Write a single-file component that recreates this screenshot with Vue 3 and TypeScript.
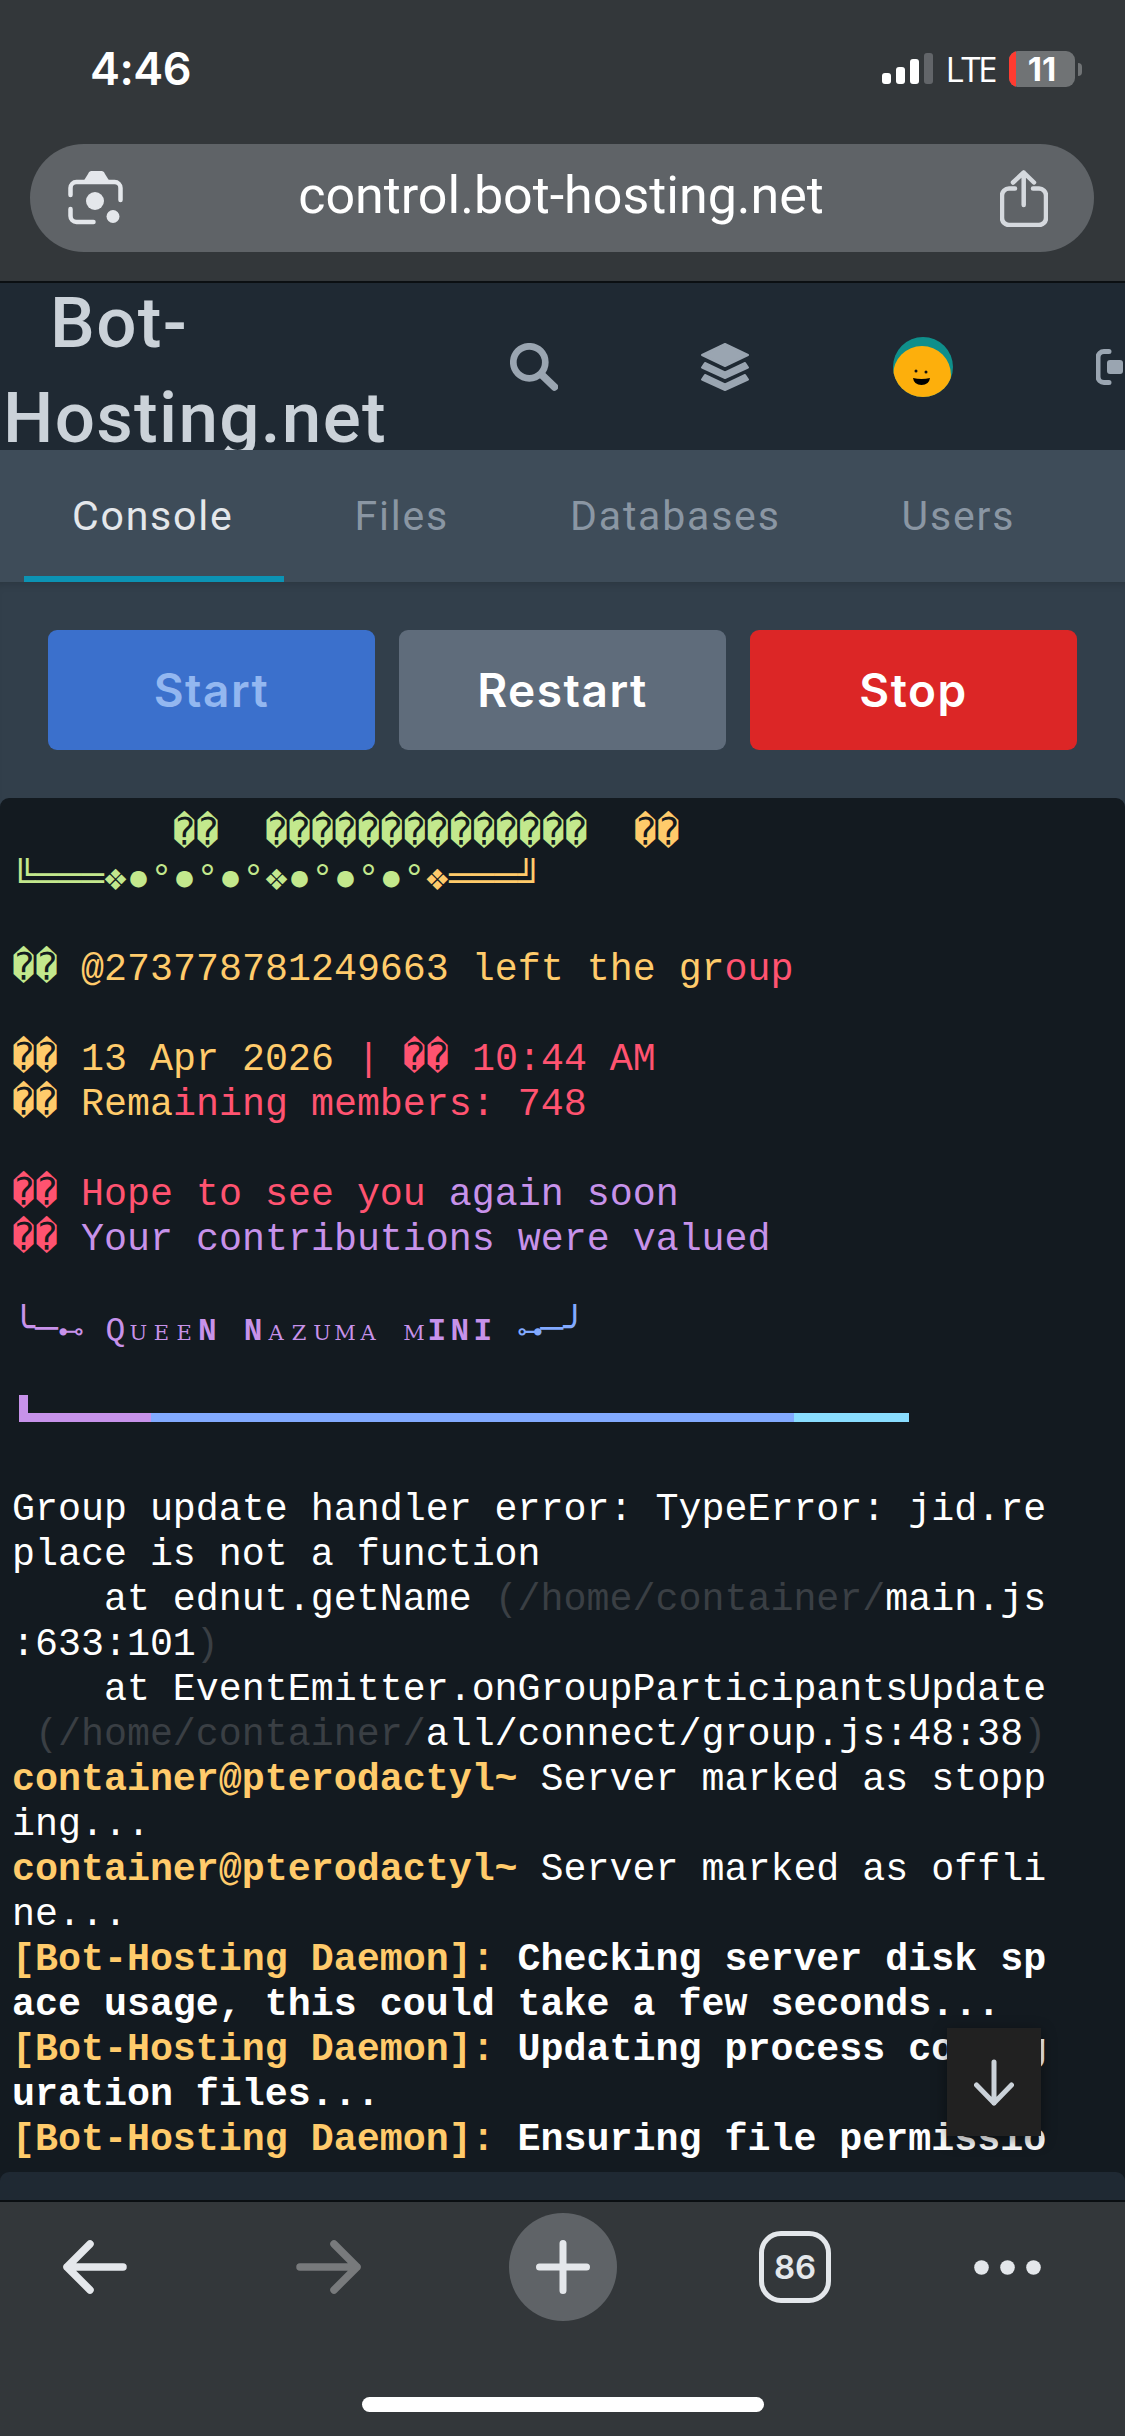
<script setup lang="ts">
interface Seg { t: string; c?: string; b?: boolean }
interface Cell { t: string; k: 'plain' | 'big' | 'q' | 'sm' | 'conn'; c: string }
const G = '#c3e88d', Y = '#ffcb6b', R = '#ff5370', P = '#c792ea', B = '#82aaff', W = '#ffffff', D = '#3a3f44'
const lines: Seg[][] = [
  [{ t: '       ��  ��������������', c: G }, { t: '  ', c: G }, { t: '��', c: Y }],
  [{ t: '╚═══❖●°●°●°❖●°●°●°', c: G }, { t: '❖═══╝', c: Y }],
  [],
  [{ t: '��', c: G }, { t: ' @273778781249663 left the gr', c: Y }, { t: 'oup', c: R }],
  [],
  [{ t: '��', c: Y }, { t: ' 13 Apr 2026 ', c: Y }, { t: '| �� 10:44 AM', c: R }],
  [{ t: '�� Rema', c: Y }, { t: 'ining members: 748', c: R }],
  [],
  [{ t: '�� Hope to see you ', c: R }, { t: 'again soon', c: P }],
  [{ t: '��', c: R }, { t: ' Your contributions were valued', c: P }],
  [],
  [],
  [],
  [],
  [],
  [{ t: 'Group update handler error: TypeError: jid.re', c: W }],
  [{ t: 'place is not a function', c: W }],
  [{ t: '    at ednut.getName ', c: W }, { t: '(/home/container/', c: D }, { t: 'main.js', c: W }],
  [{ t: ':633:101', c: W }, { t: ')', c: D }],
  [{ t: '    at EventEmitter.onGroupParticipantsUpdate', c: W }],
  [{ t: ' (/home/container/', c: D }, { t: 'all/connect/group.js:48:38', c: W }, { t: ')', c: D }],
  [{ t: 'container@pterodactyl~', c: Y, b: true }, { t: ' Server marked as stopp', c: W }],
  [{ t: 'ing...', c: W }],
  [{ t: 'container@pterodactyl~', c: Y, b: true }, { t: ' Server marked as offli', c: W }],
  [{ t: 'ne...', c: W }],
  [{ t: '[Bot-Hosting Daemon]:', c: Y, b: true }, { t: ' Checking server disk sp', c: W, b: true }],
  [{ t: 'ace usage, this could take a few seconds...', c: W, b: true }],
  [{ t: '[Bot-Hosting Daemon]:', c: Y, b: true }, { t: ' Updating process config', c: W, b: true }],
  [{ t: 'uration files...', c: W, b: true }],
  [{ t: '[Bot-Hosting Daemon]:', c: Y, b: true }, { t: ' Ensuring file permissio', c: W, b: true }]
]
const cellKind = (ch: string, i: number): Cell['k'] => {
  if (i === 17) return 'sm'
  if (ch === 'Q') return 'q'
  if ('NI'.includes(ch)) return 'big'
  if ('⊷⊶'.includes(ch)) return 'conn'
  if ('╰╯─ '.includes(ch)) return 'plain'
  return 'sm'
}
const queen: Cell[] = [...'╰─⊷ QUEEN NAZUMA MINI ⊶─╯'].map((ch, i) => ({
  t: ch,
  k: cellKind(ch, i),
  c: i >= 22 ? B : P
}))
const tabs = ['Console', 'Files', 'Databases', 'Users']
</script>

<template>
  <div class="phone">
    <header class="chrome-top">
      <div class="status">
        <span class="time">4:46</span>
        <div class="status-right">
          <svg width="51" height="31" viewBox="0 0 51 31" class="signal">
            <rect x="0" y="20" width="9" height="11" rx="3" fill="#fff" />
            <rect x="14" y="14" width="9" height="17" rx="3" fill="#fff" />
            <rect x="28" y="6" width="9" height="25" rx="3" fill="#fff" />
            <rect x="42" y="0" width="9" height="31" rx="3" fill="#626569" />
          </svg>
          <span class="lte">LTE</span>
          <div class="battery"><i class="batt-red"></i><span>11</span></div>
          <i class="batt-cap"></i>
        </div>
      </div>
      <div class="urlbar">
        <svg class="url-icon" width="56" height="56" viewBox="0 0 56 56" fill="none">
          <path d="M2.500 25v-7a6 6 0 0 1 6-6h38a6 6 0 0 1 6 6v12" stroke="#e4e7eb" stroke-width="4.500" stroke-linecap="round" />
          <path d="M15 12l5-8a4 4 0 0 1 3-3h11a4 4 0 0 1 3 3l5 8z" fill="#e4e7eb" />
          <path d="M2.500 39v7a6 6 0 0 0 6 6h17" stroke="#e4e7eb" stroke-width="4.500" stroke-linecap="round" />
          <circle cx="27" cy="31" r="9" fill="#e4e7eb" />
          <circle cx="45" cy="46.500" r="6.500" fill="#e4e7eb" />
        </svg>
        <span class="url">control.bot-hosting.net</span>
        <svg class="url-icon" width="48" height="57" viewBox="0 0 48 57" fill="none" stroke="#d5d9de" stroke-width="4.500" stroke-linecap="round" stroke-linejoin="round">
          <path d="M23.700 35V2.500M13 12.500L23.700 2.500 34 12.500" />
          <path d="M15 18.500H9a7 7 0 0 0-7 7V48a7 7 0 0 0 7 7h30a7 7 0 0 0 7-7V25.500a7 7 0 0 0-7-7h-6" />
        </svg>
      </div>
    </header>

    <nav class="topnav">
      <div class="brand">Bot-Hosting.net</div>
      <svg class="ni ni-search" width="48" height="48" viewBox="0 0 48 48" fill="none" stroke="#9aa5b1">
        <circle cx="19.300" cy="19.300" r="16" stroke-width="6.700" />
        <path d="M32 32l12.500 12" stroke-width="7.500" stroke-linecap="round" />
      </svg>
      <svg class="ni ni-layers" width="48" height="48" viewBox="0 0 48 48" fill="#9aa5b1" stroke="#9aa5b1" stroke-width="2" stroke-linejoin="round">
        <path d="M24 1L47 12 24 23 1 12z" />
        <path d="M4 20L24 29.500 44 20 47 24.500 24 35 1 24.500z" />
        <path d="M4 32L24 41.500 44 32 47 36.500 24 47 1 36.500z" />
      </svg>
      <svg class="ni ni-avatar" width="60" height="60" viewBox="0 0 60 60">
        <defs><clipPath id="avatar-clip"><circle cx="30" cy="30" r="30" /></clipPath></defs>
        <circle cx="30" cy="30" r="30" fill="#0f8f8b" />
        <circle cx="29" cy="38" r="29" fill="#fdaf0c" clip-path="url(#avatar-clip)" />
        <circle cx="23" cy="34" r="1.500" fill="#111" />
        <circle cx="33" cy="35" r="1.500" fill="#111" />
        <path d="M20 41q8.500 2 17 0q-1 7-8.500 7t-8.500-7z" fill="#000" />
      </svg>
      <svg class="ni ni-logout" width="27" height="36" viewBox="0 0 27 36" fill="none">
        <path d="M13 2.500H8a6 6 0 0 0-6 6v19a6 6 0 0 0 6 6h5" stroke="#9aa5b1" stroke-width="5" stroke-linecap="round" />
        <rect x="11" y="11" width="16" height="14" rx="3" fill="#9aa5b1" />
      </svg>
    </nav>

    <div class="subnav">
      <a v-for="(t, i) in tabs" :key="t" class="tab" :class="{ active: i === 0 }">{{ t }}</a>
    </div>

    <main class="content">
      <div class="actions">
        <button class="btn start">Start</button>
        <button class="btn restart">Restart</button>
        <button class="btn stop">Stop</button>
      </div>

      <section class="console">
        <div v-for="(l, i) in lines" :key="i" class="line">
          <template v-if="i === 11">
            <span v-for="(cell, j) in queen" :key="j" class="cell" :class="cell.k" :style="{ color: cell.c }">{{ cell.t }}</span>
          </template>
          <span v-else-if="i === 13" class="bar"><i class="seg p"></i><i class="seg b"></i><i class="seg c"></i></span>
          <template v-else>
            <span v-for="(s, j) in l" :key="j" :class="{ bold: s.b }" :style="{ color: s.c }">{{ s.t }}</span>
          </template>
        </div>
        <button class="scroll-down" aria-label="Scroll to bottom">
          <svg width="40" height="47" viewBox="0 0 40 47" fill="none" stroke="#cbd2d9" stroke-width="5" stroke-linecap="round" stroke-linejoin="round">
            <path d="M20 3v41M2.500 26L20 44 37.500 26" />
          </svg>
        </button>
      </section>
      <div class="foot-wrap"><div class="console-foot"></div></div>
    </main>

    <footer class="chrome-bottom">
      <div class="toolbar">
        <svg class="tb-back" width="64" height="54" viewBox="0 0 64 54" fill="none" stroke="#e4e7eb" stroke-width="7.500" stroke-linecap="round" stroke-linejoin="round">
          <path d="M60 27H4M27 4L4 27l23 23" />
        </svg>
        <svg class="tb-fwd" width="65" height="54" viewBox="0 0 65 54" fill="none" stroke="#787a7c" stroke-width="7.500" stroke-linecap="round" stroke-linejoin="round">
          <path d="M4 27h57M38 4l23 23-23 23" />
        </svg>
        <div class="plus">
          <svg width="54" height="54" viewBox="0 0 54 54" fill="none" stroke="#e4e7eb" stroke-width="7" stroke-linecap="round">
            <path d="M27 3.500v47M3.500 27h47" />
          </svg>
        </div>
        <div class="tabcount">86</div>
        <svg class="tb-more" width="67" height="15" viewBox="0 0 67 15" fill="#e4e7eb">
          <circle cx="7.500" cy="7.500" r="7.300" /><circle cx="33.500" cy="7.500" r="7.300" /><circle cx="59.500" cy="7.500" r="7.300" />
        </svg>
      </div>
      <div class="home"></div>
    </footer>
  </div>
</template>

<style>
html, body { margin: 0; background: #323f4b; }
</style>

<style scoped>
.phone { width: 1125px; height: 2436px; display: flex; flex-direction: column; overflow: hidden; font-family: Roboto, "Liberation Sans", sans-serif; background: #323f4b; }

.chrome-top { height: 281px; background: #33373a; border-bottom: 2px solid #0b0f12; flex: none; box-sizing: content-box; }
.status { height: 144px; display: flex; justify-content: space-between; padding: 0 43px 0 90px; box-sizing: border-box; }
.time { font-family: Inter, Roboto, sans-serif; font-weight: 600; font-size: 45px; line-height: 56px; margin-top: 41px; color: #fff; letter-spacing: -0.500px; }
.status-right { display: flex; align-items: flex-start; margin-top: 51px; }
.signal { margin-top: 2px; }
.lte { font-family: "Open Sans", Roboto, sans-serif; font-size: 35px; line-height: 36px; margin-left: 13px; padding-right: 3px; color: #fff; letter-spacing: -2.500px; white-space: nowrap; }
.battery { position: relative; width: 66px; height: 36px; margin-left: 11px; border-radius: 9px; background: #707375; overflow: hidden; text-align: center; color: #fff; font-size: 33px; font-weight: 700; line-height: 36px; font-family: Inter, Roboto, sans-serif; }
.batt-red { position: absolute; left: 0; top: 0; bottom: 0; width: 7px; background: #ff3b30; }
.batt-cap { width: 4px; height: 13px; margin: 12px 0 0 3px; background: #707375; border-radius: 0 5px 5px 0; }
.urlbar { margin: 0 31px 0 30px; height: 108px; border-radius: 54px; background: #5f6367; display: flex; align-items: center; justify-content: space-between; padding: 0 46px 0 38px; }
.url { color: #fff; font-size: 52px; line-height: 60px; margin: -4px 0 0 -2px; font-family: Roboto, sans-serif; }

.topnav { height: 167px; background: #1f2933; flex: none; display: flex; align-items: center; overflow: hidden; }
.brand { flex: none; align-self: flex-start; width: 440px; height: 175px; margin: -8px 0 0; overflow: hidden; color: #cbd2d9; font-size: 71px; font-weight: 500; line-height: 95px; letter-spacing: 1.300px; padding-left: 3px; text-indent: 47px; box-sizing: border-box; }
.ni { flex: none; }
.ni-search { margin-left: 70px; }
.ni-layers { margin-left: 143px; }
.ni-avatar { margin-left: 144px; }
.ni-logout { margin-left: 143px; }

.subnav { height: 132px; background: #3e4c59; display: flex; gap: 23px; flex: none; padding-left: 24px; }
.tab { height: 132px; box-sizing: border-box; padding: 42px 50px 0 48px; font-size: 41px; line-height: 48px; color: #8a96a3; letter-spacing: 1.800px; }
.tab.active { color: #e4e7eb; border-bottom: 6px solid #0c93b4; }

.content { flex: 1; min-height: 0; display: flex; flex-direction: column; box-shadow: inset 0 8px 8px -6px rgba(0,0,0,0.15); }
.actions { display: grid; grid-template-columns: repeat(3, 327px); gap: 24px; padding: 48px; flex: none; }
.btn { height: 120px; border: 0; border-radius: 9px; color: #fff; font-family: Inter, Roboto, sans-serif; font-size: 46px; font-weight: 600; padding: 0; letter-spacing: 1.500px; }
.start { background: #3b70cc; color: #93b7f0; }
.restart { background: #5f6c7b; }
.stop { background: #dc2626; }

.console { position: relative; flex: none; height: 1374px; box-sizing: border-box; background: #131a20; border-radius: 9px 9px 0 0; padding: 12px 0 0 12px; overflow: hidden; }
.line { height: 45px; font-family: "Liberation Mono", monospace; font-size: 38.300px; line-height: 51px; white-space: pre; color: #fff; }
.bold { font-weight: 700; }
.cell { display: inline-block; width: 22.980px; text-align: center; vertical-align: baseline; line-height: 45px; overflow: visible; }
.cell.big { font-size: 31px; font-weight: 700; }
.cell.q { font-size: 33px; }
.cell.sm { font-family: "DejaVu Serif", "Liberation Serif", serif; font-size: 21px; }
.cell.conn { font-size: 26px; }
.bar { display: flex; width: 890px; height: 27px; box-sizing: border-box; margin-left: 7px; padding-top: 18px; position: relative; }
.bar::before { content: ""; position: absolute; left: 0; top: 0; width: 9px; height: 18px; background: #c792ea; }
.seg { display: block; height: 9px; }
.seg.p { width: 131.500px; background: #c792ea; }
.seg.b { width: 643.500px; background: #82aaff; }
.seg.c { width: 115px; background: #89ddff; }
.scroll-down { position: absolute; left: 947px; top: 1230px; width: 94px; height: 108px; border: 0; padding: 0; background: #212121; box-shadow: 0 4px 14px rgba(0,0,0,0.45); display: flex; align-items: center; justify-content: center; }
.foot-wrap { flex: 1; background: #131a20; display: flex; }
.console-foot { flex: 1; background: #1f2933; border-radius: 9px 9px 0 0; }

.chrome-bottom { flex: none; height: 234px; background: #33373a; border-top: 2px solid #0b0f12; }
.toolbar { display: flex; align-items: center; padding: 11px 0 0 63px; height: 108px; }
.tb-fwd { margin-left: 169px; }
.plus { width: 108px; height: 108px; margin-left: 148px; border-radius: 50%; background: #5f6367; display: flex; align-items: center; justify-content: center; }
.tabcount { box-sizing: border-box; width: 72px; height: 72px; margin-left: 142px; border: 5.500px solid #e4e7eb; border-radius: 22px; color: #e4e7eb; font-size: 33px; font-weight: 600; display: flex; align-items: center; justify-content: center; font-family: Inter, Roboto, sans-serif; }
.tb-more { margin-left: 143px; }
.home { width: 402px; height: 15px; border-radius: 8px; background: #fff; margin: 76px auto 0; }
</style>
